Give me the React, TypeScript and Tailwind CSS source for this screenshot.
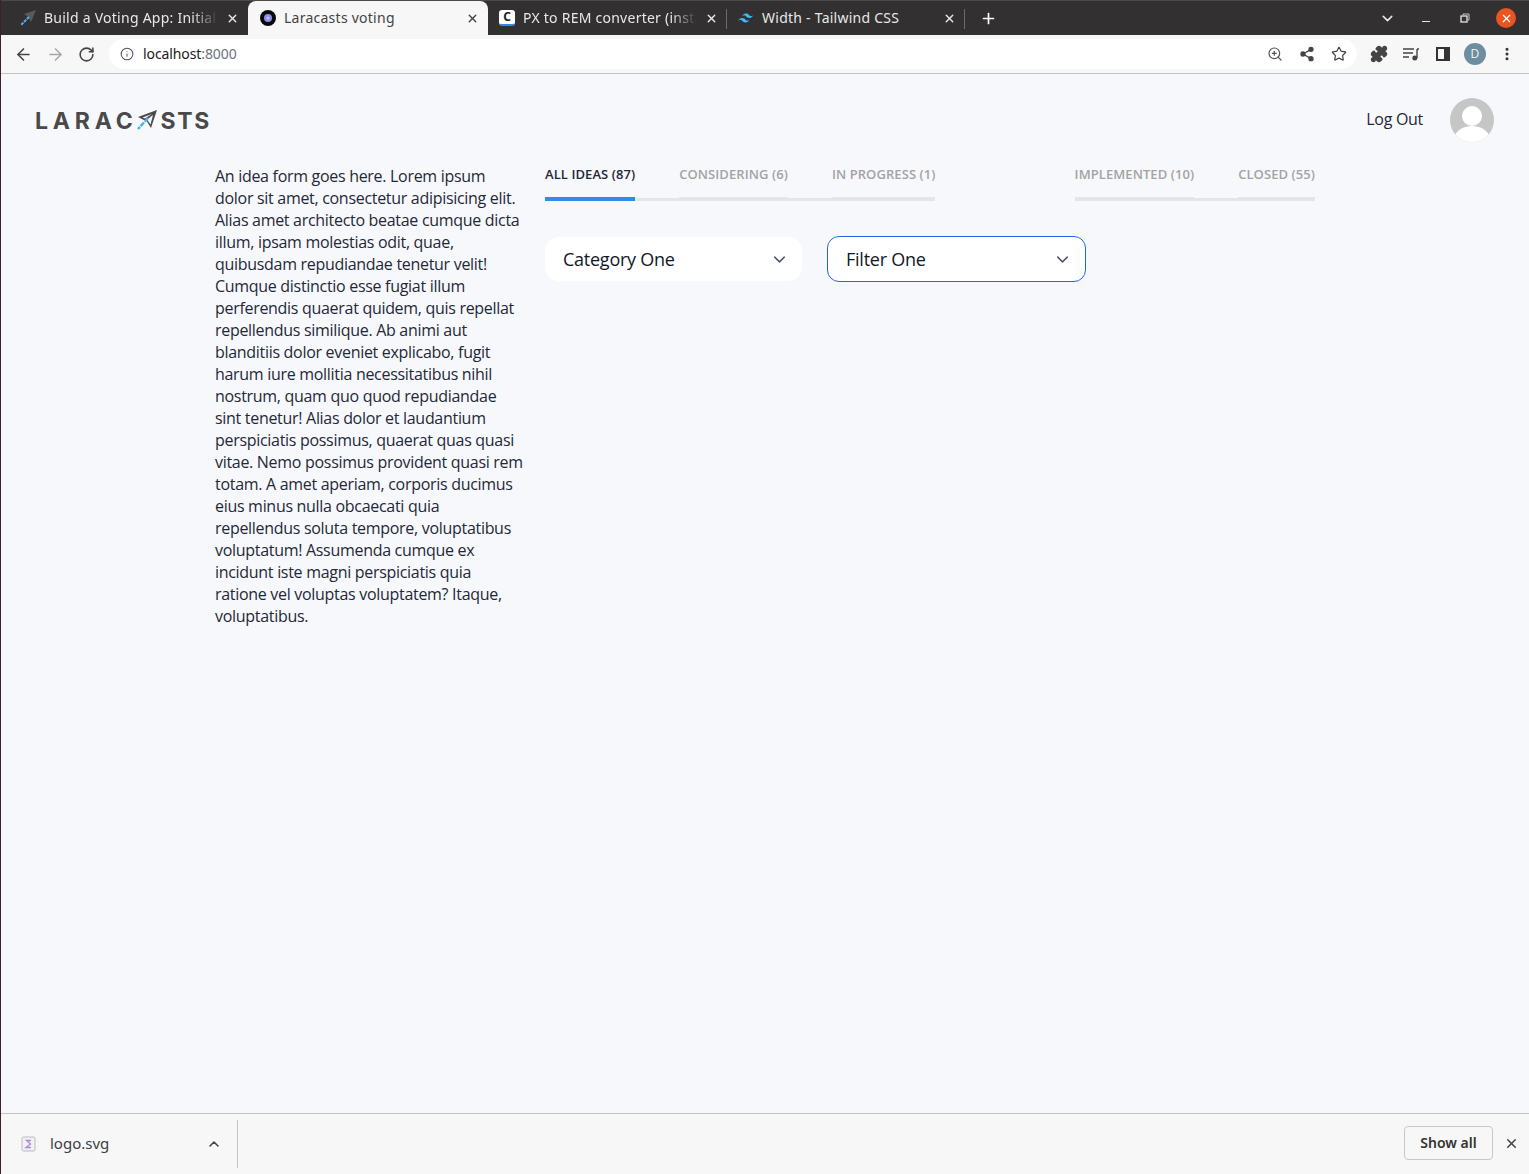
import React from "react";
import { ArrowLeft, ArrowRight, RotateCw, Info, ZoomIn, Share2, Star, Puzzle, ChevronDown, ChevronUp, X, Plus, MoreVertical } from "lucide-react";

const ui = { fontFamily: '"Noto Sans", "Open Sans", sans-serif' };

function Tab({ title, active, icon, width, fade, sep }: { title: string; active?: boolean; icon: React.ReactNode; width: string; fade?: boolean; sep?: boolean }) {
  return (
    <div className={`relative flex items-center h-[34px] shrink-0 ${width} ${active ? "bg-[#f7f7f7] rounded-t-[8px] text-[#444]" : "text-[#e8e8e8]"}`}>
      <span className="w-[16px] h-[16px] flex items-center justify-center shrink-0">{icon}</span>
      <span className="ml-[8px] -mt-[2px] text-[14px] whitespace-nowrap overflow-hidden flex-1 tracking-[0.25px]" style={fade ? { maskImage: "linear-gradient(to right, black 85%, transparent)" } : undefined}>{title}</span>
      <X size={13} strokeWidth={2.5} className="ml-[8px] mr-[9px] shrink-0" />
      {sep && <span className="absolute right-0 top-[8px] h-[20px] w-px bg-[#6b6b6b]" />}
    </div>
  );
}

function TabLink({ label, active }: { label: string; active?: boolean }) {
  return (
    <a className={`block h-[35px] -mb-[3px] border-b-[4px] text-[13px] font-semibold leading-[16px] tracking-[0.08px] whitespace-nowrap ${active ? "border-[#328af1] text-[#1f2937]" : "border-[#e5e5e5] text-[#a3a3a3]"}`}>
      {label}
    </a>
  );
}

function Select({ label, focus, width }: { label: string; focus?: boolean; width: string }) {
  return (
    <div className={`flex items-center justify-between bg-white pl-[18px] pr-[13px] ${width} ${focus ? "h-[46px] rounded-[12px] border border-[#2563eb]" : "h-[44px] rounded-[14px]"}`}>
      <span className="text-[18px] tracking-[-0.25px] text-[#111827]">{label}</span>
      <ChevronDown size={19} strokeWidth={1.8} className="text-[#4b5563]" />
    </div>
  );
}

export default function App() {
  return (
    <div className="h-[1174px] w-full flex flex-col overflow-hidden border-l border-l-[#3a2226] bg-[#f7f8fc]" style={{ fontFamily: '"Open Sans", sans-serif' }}>
      <div className="h-[35px] shrink-0 bg-[#323031] border-t border-t-[#4a4a4a] flex items-end" style={ui}>
        <Tab
          width="w-[228px] ml-[19px]"
          fade
          title="Build a Voting App: Initial"
          icon={
            <svg width="16" height="16" viewBox="0 0 16 16">
              <path d="M16 0 L4 4 L8 7 L11 12 Z" fill="#5a5a5a" />
              <path d="M9 7 L1 15" stroke="#4db2f5" strokeWidth="2" strokeDasharray="3 1" />
            </svg>
          }
        />
        <Tab
          width="w-[240px] pl-[12px]"
          active
          title="Laracasts voting"
          icon={
            <svg width="16" height="16" viewBox="0 0 16 16">
              <circle cx="8" cy="8" r="8" fill="#0a0a0a" />
              <circle cx="8" cy="8" r="4" fill="#8f8cf0" />
              <circle cx="8" cy="8" r="1.5" fill="#c4c2fa" />
            </svg>
          }
        />
        <Tab
          width="w-[239px] pl-[11px]"
          fade
          sep
          title="PX to REM converter (insta"
          icon={
            <span className="w-[16px] h-[16px] rounded-[3px] bg-white flex items-center justify-center text-[12px] leading-none font-bold text-[#222] border-b-2 border-b-[#3b82f6]">C</span>
          }
        />
        <Tab
          width="w-[238px] pl-[11px]"
          sep
          title="Width - Tailwind CSS"
          icon={
            <svg width="16" height="16" viewBox="0 0 16 16" fill="#38bdf8">
              <path d="M8 3.5C6 3.5 4.7 4.5 4.2 6.5c.8-1 1.6-1.4 2.6-1.1.6.2 1 .6 1.4 1.1.7.7 1.5 1.5 3.1 1.5 2 0 3.3-1 3.8-3-.8 1-1.6 1.4-2.6 1.1-.6-.2-1-.6-1.4-1.1C10 3.9 9.2 3.5 8 3.5ZM4.2 8C2.2 8 .9 9 .4 11c.8-1 1.6-1.4 2.6-1.1.6.2 1 .6 1.4 1.1.7.7 1.5 1.5 3.1 1.5 2 0 3.3-1 3.8-3-.8 1-1.6 1.4-2.6 1.1-.6-.2-1-.6-1.4-1.1C7 8.8 6 8 4.2 8Z" />
            </svg>
          }
        />
        <span className="h-[34px] ml-[15px] flex items-center"><Plus size={17} strokeWidth={2.4} className="text-white" /></span>
        <div className="flex-1" />
        <div className="h-[34px] flex items-center text-[#e8e8e8]">
          <ChevronDown size={17} strokeWidth={2.2} />
          <span className="ml-[26px] mt-[6px] w-[8px] h-[1px] bg-[#e8e8e8]" />
          <svg width="10" height="10" viewBox="0 0 10 10" fill="none" stroke="currentColor" className="ml-[30px]">
            <rect x="1" y="3" width="6" height="6" strokeWidth="1.3" />
            <path d="M3 2V1H9V7H8" strokeWidth="0.8" />
          </svg>
          <span className="ml-[26px] mr-[13px] w-[20px] h-[20px] rounded-full bg-[#ea5420] flex items-center justify-center"><X size={13} strokeWidth={2.2} className="text-white" /></span>
        </div>
      </div>

      <div className="h-[39px] shrink-0 bg-[#f7f7f7] border-b border-b-[#c4c4c4] flex items-center pl-[13px] pr-[14px]" style={ui}>
        <ArrowLeft size={19} strokeWidth={2} className="text-[#444]" />
        <ArrowRight size={19} strokeWidth={2} className="ml-[13px] text-[#a8a8a8]" />
        <RotateCw size={17} strokeWidth={2.2} className="ml-[13px] text-[#444]" />
        <div className="ml-[14px] flex-1 h-[30px] rounded-full bg-white flex items-center pl-[11px] pr-[10px]">
          <Info size={14} strokeWidth={1.8} className="text-[#555]" />
          <span className="ml-[9px] -mt-[2px] text-[14px] tracking-[-0.1px] text-[#1a1a1a]">localhost<span className="text-[#6b7280]">:8000</span></span>
          <div className="flex-1" />
          <ZoomIn size={16} strokeWidth={1.8} className="text-[#555]" />
          <Share2 size={16} strokeWidth={2} fill="currentColor" className="ml-[16px] text-[#444]" />
          <Star size={16} strokeWidth={1.8} className="ml-[16px] text-[#444]" />
        </div>
        <Puzzle size={18} strokeWidth={2} fill="#444" className="ml-[13px] text-[#444]" />
        <svg width="18" height="14" viewBox="0 0 18 14" className="ml-[14px] text-[#444]" fill="none" stroke="currentColor" strokeWidth="1.4">
          <path d="M1 2H12M1 6H11M1 10H7" />
          <path d="M15 2V11" />
          <path d="M15 2H17" />
          <circle cx="12.8" cy="11" r="1.8" fill="currentColor" />
        </svg>
        <svg width="14" height="14" viewBox="0 0 14 14" className="ml-[16px]">
          <path d="M0 0H14V14H0ZM2 2V12H8V2Z" fill="#333" fillRule="evenodd" />
        </svg>
        <span className="ml-[14px] w-[22px] h-[22px] rounded-full bg-[#6e8d9e] flex items-center justify-center text-[12px] text-[#e7eef2]">D</span>
        <MoreVertical size={16} strokeWidth={2.6} className="ml-[13px] text-[#333]" />
      </div>

      <header className="shrink-0 flex items-center justify-between pl-[34px] pr-[35px] pt-[24px]">
        <div className="relative h-[44px] text-[#4a4a4a] text-[23px] font-bold leading-[46px] tracking-[4.8px] whitespace-nowrap" style={{ fontFamily: '"Inter", sans-serif' }}>
          LARAC<span className="inline-block w-[23px]" /><span className="tracking-[1.6px]">STS</span>
          <svg width="20" height="20" viewBox="0 0 20 20" className="absolute left-[102px] top-[12px]">
            <path d="M20 0 L1 7 L7 10 L9 10 L14 18 Z M15 4 L8 8.5 L5.5 7.5 Z M16 5 L13.5 14.5 L10 9.5 Z" fill="#4a4a4a" fillRule="evenodd" />
            <path d="M11 8 L1 19" stroke="#4db2f5" strokeWidth="2.4" strokeDasharray="5 1" />
          </svg>
        </div>
        <div className="flex items-center">
          <a className="-mt-[2px] text-[16px] tracking-[-0.3px] text-[#1f2937]">Log Out</a>
          <svg width="44" height="44" viewBox="0 0 44 44" className="ml-[27px]">
            <defs><clipPath id="av"><circle cx="22" cy="22" r="22" /></clipPath></defs>
            <g clipPath="url(#av)">
              <rect width="44" height="44" fill="#c6c6c6" />
              <circle cx="22" cy="18" r="10" fill="#fff" />
              <ellipse cx="22" cy="42" rx="18" ry="14" fill="#fff" />
            </g>
          </svg>
        </div>
      </header>

      <main className="flex-1 w-[1100px] ml-[214px] mt-[23px] flex">
        <aside className="w-[310px] shrink-0">
          <p className="text-[16px] leading-[22px] tracking-[-0.3px] text-[#1f2937]">
            An idea form goes here. Lorem ipsum dolor sit amet, consectetur adipisicing elit. Alias amet architecto beatae cumque dicta illum, ipsam molestias odit, quae, quibusdam repudiandae tenetur velit! Cumque distinctio esse fugiat illum perferendis quaerat quidem, quis repellat repellendus similique. Ab animi aut blanditiis dolor eveniet explicabo, fugit harum iure mollitia necessitatibus nihil nostrum, quam quo quod repudiandae sint tenetur! Alias dolor et laudantium perspiciatis possimus, quaerat quas quasi vitae. Nemo possimus provident quasi rem totam. A amet aperiam, corporis ducimus eius minus nulla obcaecati quia repellendus soluta tempore, voluptatibus voluptatum! Assumenda cumque ex incidunt iste magni perspiciatis quia ratione vel voluptas voluptatem? Itaque, voluptatibus.
          </p>
        </aside>
        <section className="ml-[20px] w-[770px]">
          <nav className="flex justify-between pt-[1px]">
            <div className="flex gap-[44px] border-b-[3px] border-b-[#e5e5e5] h-[35px]">
              <TabLink label="ALL IDEAS (87)" active />
              <TabLink label="CONSIDERING (6)" />
              <TabLink label="IN PROGRESS (1)" />
            </div>
            <div className="flex gap-[44px] border-b-[3px] border-b-[#e5e5e5] h-[35px]">
              <TabLink label="IMPLEMENTED (10)" />
              <TabLink label="CLOSED (55)" />
            </div>
          </nav>
          <div className="mt-[35px] flex items-center gap-[25px]">
            <Select label="Category One" width="w-[257px]" />
            <Select label="Filter One" width="w-[259px]" focus />
          </div>
        </section>
      </main>

      <div className="h-[61px] shrink-0 bg-[#f7f7f7] border-t border-t-[#c4c4c4] flex items-center" style={ui}>
        <svg width="16" height="16" viewBox="0 0 16 16" className="ml-[20px]">
          <rect x="1" y="1" width="13" height="14" rx="1.5" fill="#f3eff7" stroke="#bbb" />
          <path d="M10 4.5H5.5L9.5 8L5 11.5H10" fill="none" stroke="#a78bda" strokeWidth="1.3" />
        </svg>
        <span className="ml-[13px] -mt-[2px] text-[15px] text-[#3b3f46]">logo.svg</span>
        <div className="w-[97px]" />
        <ChevronUp size={16} strokeWidth={2.4} className="text-[#444]" />
        <span className="ml-[15px] h-[48px] w-px bg-[#c4c4c4]" />
        <div className="flex-1" />
        <button className="h-[34px] w-[89px] mb-[2px] pb-[1px] rounded-[4px] border border-[#c8c8c8] text-[14px] font-semibold text-[#333]">Show all</button>
        <X size={15} strokeWidth={2.4} className="ml-[11px] mr-[10px] mb-[2px] text-[#444]" />
      </div>
    </div>
  );
}
